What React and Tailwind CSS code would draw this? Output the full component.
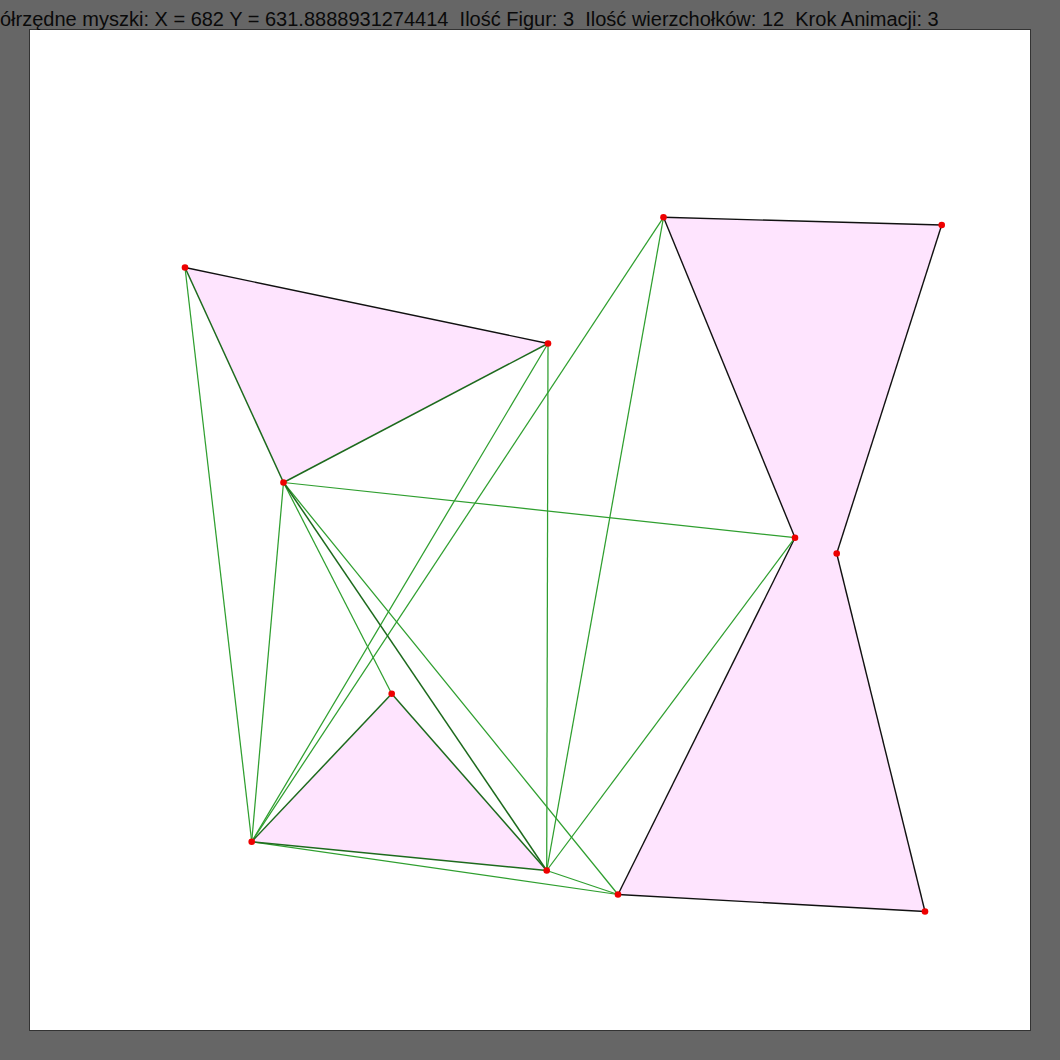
const P = {
  A: [185, 267.5],
  B: [548, 343.5],
  C: [283.5, 482.5],
  D: [391.7, 693.7],
  E: [546.7, 870.5],
  F: [251.7, 841.7],
  G: [663.5, 217.3],
  H: [941.7, 225],
  I: [836.7, 553.5],
  J: [925, 911.5],
  K: [618, 894.5],
  L: [795, 537.7],
};

const figures = [
  ["A", "B", "C"],
  ["D", "E", "F"],
  ["G", "H", "I", "J", "K", "L"],
];

// green segments between vertices
const green = [
  ["A", "F"],
  ["B", "E"],
  ["B", "F"],
  ["C", "L"],
  ["C", "F"],
  ["C", "K"],
  ["C", "D"],
  ["G", "F"],
  ["G", "E"],
  ["L", "E"],
  ["F", "K"],
  ["E", "K"],
];

const darkGreen = [
  ["A", "C"],
  ["C", "B"],
  ["F", "D"],
  ["D", "E"],
  ["E", "F"],
  ["C", "E"],
];

const blackEdges = [
  ["A", "B"],
  ["G", "H"],
  ["H", "I"],
  ["I", "J"],
  ["J", "K"],
  ["K", "L"],
  ["L", "G"],
];

function Seg({ a, b, color, w = 1.1 }) {
  return (
    <line
      x1={P[a][0]}
      y1={P[a][1]}
      x2={P[b][0]}
      y2={P[b][1]}
      stroke={color}
      strokeWidth={w}
    />
  );
}

export default function App() {
  return (
    <div className="h-[1060px] w-[1060px] overflow-hidden bg-[#666666] font-['Liberation_Sans',Arial,sans-serif]">
      <div className="ml-[-40px] h-[29px] whitespace-pre pt-[9px] text-[20px] leading-[20px] text-[#0a0a0a]">
        Współrzędne myszki: X = 682 Y = 631.8888931274414  Ilość Figur: 3  Ilość wierzchołków: 12  Krok Animacji: 3
      </div>
      <div className="ml-[29px] h-[1002px] w-[1002px] border border-[#333333] bg-white">
        <svg width="1000" height="1000" viewBox="30 30 1000 1000" className="block">
          {figures.map((f, i) => (
            <polygon
              key={i}
              points={f.map((k) => P[k].join(",")).join(" ")}
              fill="#fee4fe"
              stroke="none"
            />
          ))}
          {blackEdges.map(([a, b]) => (
            <Seg key={a + b} a={a} b={b} color="#111111" w={1.4} />
          ))}
          {green.map(([a, b]) => (
            <Seg key={a + b} a={a} b={b} color="#2f9f2f" w={1.25} />
          ))}
          {darkGreen.map(([a, b]) => (
            <Seg key={a + b} a={a} b={b} color="#1d6a1d" w={1.5} />
          ))}
          {Object.entries(P).map(([k, [x, y]]) => (
            <circle key={k} cx={x} cy={y} r="3.3" fill="#ee0000" />
          ))}
        </svg>
      </div>
    </div>
  );
}
